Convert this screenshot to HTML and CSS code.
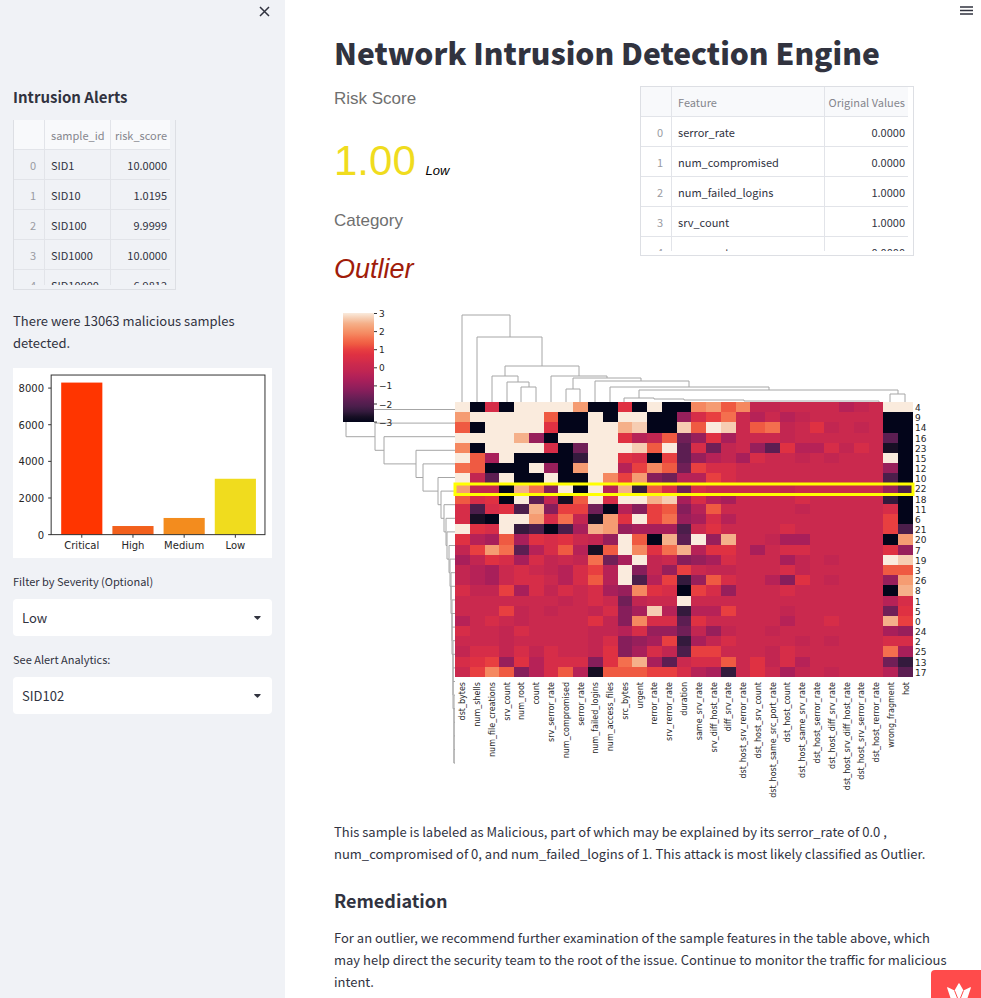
FILE: index.html
```html
<!DOCTYPE html>
<html lang="en">
<head>
<meta charset="UTF-8">
<meta name="viewport" content="width=device-width, initial-scale=1.0">
<title>Network Intrusion Detection Engine</title>
<link rel="stylesheet" href="styles.css">
</head>
<body>

<div class="app">
<aside class="sidebar">
    <button type="button" class="icon-button close" aria-label="Close sidebar">
        <svg width="11" height="11" viewBox="0 0 11 11"><path d="M1 1L10 10M10 1L1 10"/></svg>
    </button>
    <h2>Intrusion Alerts</h2>
    <div class="frame alerts">
        <div class="frame-view">
        <table>
            <thead>
            <tr><th class="idx"></th><th class="name">sample_id</th><th class="num">risk_score</th></tr>
            </thead>
            <tbody>
            <tr><td class="idx">0</td><td>SID1</td><td class="num">10.0000</td></tr>
            <tr><td class="idx">1</td><td>SID10</td><td class="num">1.0195</td></tr>
            <tr><td class="idx">2</td><td>SID100</td><td class="num">9.9999</td></tr>
            <tr><td class="idx">3</td><td>SID1000</td><td class="num">10.0000</td></tr>
            <tr><td class="idx">4</td><td>SID10000</td><td class="num">6.9812</td></tr>
            </tbody>
        </table>
        </div>
    </div>
    <p class="summary">There were 13063 malicious samples detected.</p>
    <svg class="bar-chart" id="barChart" viewBox="0 0 258 189" role="img" aria-label="Alerts by severity"></svg>
    <div class="field">
        <label for="severity">Filter by Severity (Optional)</label>
        <div class="select-box">
            <select id="severity"><option>Low</option></select>
            <svg class="caret" width="7" height="4" viewBox="0 0 7 4"><path d="M0 0.5Q0 0 1 0H6Q7 0 6.6 0.7L4 3.6Q3.5 4 3 3.6L0.4 1Z"/></svg>
        </div>
    </div>
    <div class="field">
        <label for="alert">See Alert Analytics:</label>
        <div class="select-box">
            <select id="alert"><option>SID102</option></select>
            <svg class="caret" width="7" height="4" viewBox="0 0 7 4"><path d="M0 0.5Q0 0 1 0H6Q7 0 6.6 0.7L4 3.6Q3.5 4 3 3.6L0.4 1Z"/></svg>
        </div>
    </div>
</aside>

<main class="main">
    <button type="button" class="icon-button menu" aria-label="Menu">
        <svg width="13" height="9" viewBox="0 0 13 9"><path d="M0 1H13M0 4.5H13M0 8H13"/></svg>
    </button>
    <div class="content">
        <h1>Network Intrusion Detection Engine</h1>
        <div class="columns">
            <div class="indicators">
                <div class="caption">Risk Score</div>
                <div class="score">1.00 <em>Low</em></div>
                <div class="caption">Category</div>
                <div class="category">Outlier</div>
            </div>
            <div>
            <div class="frame features">
                <div class="frame-view">
                <table>
                    <thead>
                    <tr><th class="idx"></th><th class="name">Feature</th><th class="num">Original Values</th></tr>
                    </thead>
                    <tbody>
                    <tr><td class="idx">0</td><td>serror_rate</td><td class="num">0.0000</td></tr>
                    <tr><td class="idx">1</td><td>num_compromised</td><td class="num">0.0000</td></tr>
                    <tr><td class="idx">2</td><td>num_failed_logins</td><td class="num">1.0000</td></tr>
                    <tr><td class="idx">3</td><td>srv_count</td><td class="num">1.0000</td></tr>
                    <tr><td class="idx">4</td><td>num_root</td><td class="num">0.0000</td></tr>
                    </tbody>
                </table>
                </div>
            </div>
            </div>
        </div>
        <svg class="cluster-map" id="clusterMap" viewBox="0 0 598 512" role="img" aria-label="Feature cluster map"></svg>
        <p>This sample is labeled as Malicious, part of which may be explained by its serror_rate of 0.0 , num_compromised of 0, and num_failed_logins of 1. This attack is most likely classified as Outlier.</p>
        <h3>Remediation</h3>
        <p>For an outlier, we recommend further examination of the sample features in the table above, which may help direct the security team to the root of the issue. Continue to monitor the traffic for malicious intent.</p>
    </div>
</main>
</div>

<a class="badge" href="#" aria-label="Hosted app">
    <svg width="24" height="16" viewBox="0 0 24 16"><path d="M0 5.500Q0 5 0.800 5.200L7.500 8.500L11.500 1.500Q12 1 12.500 1.500L16.500 8.500L23.200 5.200Q24 5 24 5.500L20.500 16H3.500Z"/><path class="cut" d="M7.500 8.500L10.500 16M16.500 8.500L13.500 16"/></svg>
</a>

<script src="charts.js"></script>
</body>
</html>
```
FILE: styles.css
```css
* {
  box-sizing: border-box;
}
body {
  margin: 0;
  font-family: "Noto Sans CJK SC", "Noto Sans", sans-serif;
  font-size: 13px;
  line-height: 22px;
  color: #31333f;
  background: #fff;
}
.app {
  display: flex;
  height: 100vh;
  overflow: hidden;
}
.sidebar {
  flex: 0 0 285px;
  display: flex;
  flex-direction: column;
  padding: 3px 13px 0 13px;
  background: #f0f2f6;
}
.icon-button {
  display: flex;
  flex-shrink: 0;
  align-items: center;
  justify-content: center;
  align-self: flex-end;
  width: 16px;
  height: 16px;
  padding: 0;
  border: none;
  background: none;
  cursor: pointer;
}
.icon-button path {
  fill: none;
  stroke: #31333f;
  stroke-width: 1.5;
}
h1, h2, h3, p {
  margin: 0;
}
h2 {
  margin-top: 67px;
  font-size: 15px;
  line-height: 22px;
}
.frame {
  border: 1px solid #dddfe4;
  height: 170px;
  padding: 0 5px 4px 0;
}
.alerts {
  width: 163px;
  margin-top: 12px;
  border-top: none;
}
.features {
  width: 274px;
}
.frame-view {
  height: 100%;
  overflow: hidden;
}
table {
  width: 100%;
  table-layout: fixed;
  border-collapse: separate;
  border-spacing: 0;
  font-size: 11px;
}
th, td {
  height: 30px;
  padding: 0 3px 0 6px;
  border-bottom: 1px solid #e2e4e9;
  border-right: 1px solid #e2e4e9;
  line-height: 16px;
  font-weight: 400;
  text-align: left;
  white-space: nowrap;
}
th {
  background: #f8f9fb;
  color: #85868d;
}
th:last-child, td:last-child {
  border-right: none;
}
.idx {
  width: 31px;
  padding-right: 8px;
  color: #9a9ba2;
  text-align: right;
}
.num {
  padding-left: 2px;
  text-align: right;
}
.alerts .name {
  width: 66px;
}
.features .name {
  width: 153px;
}
.summary {
  margin-top: 20px;
}
.bar-chart {
  display: block;
  width: 100%;
  margin-top: 14px;
  background: #fff;
}
.field {
  margin-top: 13px;
}
.field label {
  display: block;
  font-size: 11px;
  line-height: 20px;
}
.select-box {
  position: relative;
  margin-top: 8px;
}
.select-box select {
  display: block;
  width: 100%;
  height: 37px;
  padding: 0 9px;
  border: none;
  border-radius: 4px;
  background: #fff;
  color: #31333f;
  font-family: inherit;
  font-size: 13px;
  appearance: none;
}
.caret {
  position: absolute;
  right: 11px;
  top: 17px;
  fill: #31333f;
  pointer-events: none;
}
.main {
  flex: 1;
  display: flex;
  flex-direction: column;
  padding-top: 2px;
}
.menu {
  margin-right: 7px;
}
.content {
  padding: 12px 49px 0;
}
.content p {
  margin-right: -20px;
}
h1 {
  font-size: 30px;
  font-weight: 900;
  line-height: 44px;
}
.columns {
  display: grid;
  grid-template-columns: 1fr 1fr;
  gap: 14px;
  margin-top: 12px;
}
.indicators {
  font-family: "Liberation Sans", Arial, sans-serif;
}
.caption {
  font-size: 17px;
  line-height: 26px;
  color: #6f6f6f;
}
.score {
  margin: 26px 0 24px;
  font-size: 42px;
  line-height: 46px;
  color: #f0dc1e;
}
.score em {
  margin-left: -2px;
  font-size: 13px;
  line-height: 16px;
  color: #000;
}
.category {
  margin-top: 19px;
  font-size: 27px;
  line-height: 32px;
  font-style: italic;
  color: #a01c0a;
}
.cluster-map {
  display: block;
  width: 100%;
  margin: 15px 0 9px;
}
h3 {
  margin: 22px 0 14px;
  font-size: 18px;
  line-height: 26px;
}
svg text {
  font-family: "DejaVu Sans", sans-serif;
  fill: #262626;
}
.bar-chart text {
  font-size: 10px;
}
.cluster-map text {
  font-size: 9px;
}
.cluster-map .feature {
  font-size: 8px;
}
.axis {
  fill: none;
  stroke: #333;
  stroke-width: 1;
}
.tree {
  fill: none;
  stroke: #a6a6a6;
  stroke-width: 1;
}
.highlight {
  fill: none;
  stroke: #ffff00;
  stroke-width: 3;
}
.badge {
  position: fixed;
  right: 0;
  bottom: 0;
  display: flex;
  justify-content: center;
  width: 50px;
  height: 28px;
  padding: 12px 0 0 6px;
  border-top-left-radius: 4px;
  background: #ff4b4b;
}
.badge svg {
  flex-shrink: 0;
  fill: #fff;
}
.badge .cut {
  fill: none;
  stroke: #ff4b4b;
}
```
FILE: charts.js
```javascript
var SVG_NS = 'http://www.w3.org/2000/svg';

function add(parent, tag, attrs, text) {
    var el = document.createElementNS(SVG_NS, tag);
    for (var key in attrs) {
        el.setAttribute(key, attrs[key]);
    }
    if (text !== undefined) {
        el.textContent = text;
    }
    parent.appendChild(el);
    return el;
}

// severity bar chart
function drawBars() {
    var svg = document.getElementById('barChart');
    var bars = [
        ['Critical', 8300, '#ff3500'],
        ['High', 470, '#f2601c'],
        ['Medium', 910, '#f38c1e'],
        ['Low', 3050, '#f0dc1e']
    ];
    var bottom = 166;
    var scale = 36.5 / 2000;
    bars.forEach(function (bar, i) {
        var x = 48 + i * 51;
        var h = bar[1] * scale;
        add(svg, 'rect', {x: x, y: bottom - h, width: 41, height: h, fill: bar[2]});
        add(svg, 'path', {'class': 'axis', d: 'M' + (x + 20.5) + ' 166v3'});
        add(svg, 'text', {x: x + 20.5, y: 180, 'text-anchor': 'middle'}, bar[0]);
    });
    for (var v = 0; v <= 8000; v += 2000) {
        var y = bottom - v * scale;
        add(svg, 'path', {'class': 'axis', d: 'M35 ' + y + 'h3'});
        add(svg, 'text', {x: 31, y: y + 4, 'text-anchor': 'end'}, v);
    }
    add(svg, 'rect', {'class': 'axis', x: 38, y: 7, width: 213, height: 159});
}

// colour steps from low to high, one character per cell in the rows below
var KEYS = '0123456789abcdefghijkl';
var COLORS = [
    '#03051a', '#170f24', '#341a3d', '#4b1e4b', '#5c1e52', '#701f57',
    '#861e5b', '#971f5b', '#a81f5a', '#b62257', '#c22651', '#ca294e',
    '#d62d48', '#df3142', '#e83f40', '#ef5a42', '#f46f4e', '#f58860',
    '#f59c72', '#f5b08a', '#f6cdb2', '#faebdd'
];
var ROWS = [
    [4, 'l0c0lllli00d0l00hifhaabbbb9abll'],
    [9, 'illlllf00l0ll007cegb9b9abbbbb00'],
    [14, 'f0lllld00lljk00kflkbfgabdabab00'],
    [16, 'llllj70lllld9af57d8bbbabbbbbb40'],
    [23, 'h0llllc05lllkfl4c5ab74d99cacb10'],
    [15, 'lf8l00002lldc0e479a8cbbababbbl0'],
    [12, 'gf000l70ill9ehf5eccbbbbbbbbbb70'],
    [10, 'la4l00l00lhei6599ecbbbbbbbbbb30'],
    [22, 'iaa0jg6l0l9j2fc5cbbbbbabbbbbb73'],
    [18, 'fcd0l4a1flclljk8c98bbbbcbbbbb20'],
    [11, 'c3cd3j6ee5096ef69fbbbbbabbbbbc0'],
    [6, 'c10llicga1idleg78c9bbbbbbbbbbe0'],
    [21, 'ldcl23038ji78883bdbbbbcbbbbbbe3'],
    [20, 'd98f8dcdba7lf0j4l7jbba88bbbbb0i'],
    [7, 'aeig49cf91flhdgj9ddb8bccbbbbbd7'],
    [19, '8adc8cabag58lab678cbbb8ababbblk'],
    [3, 'a98bcba9ce9l6a7ebaabbbcabbbbbff'],
    [26, 'a98bccb9cf9l39e27fcbb96dbabbb7i'],
    [8, 'caae8cacbc87hdc0ec7bbbcbbbbbb0j'],
    [1, 'bbbbbbbabcb5abblbbbbbbbbbbbbb9c'],
    [5, 'bbbeababbac68k9299ebbbabbbbbb5d'],
    [0, '9bcbabbbbda6hcc4dbbbbb9bbcbbbje'],
    [24, 'cbbacbbbbaa9c775a7abbabbbbbbb87'],
    [2, 'bbbabbbbbac678e28acbbbbababbbcc'],
    [25, 'accacacbbad68ca3eebbbacbbbbbbg8'],
    [13, 'cde7d9ccc6dgj84bccfbdac9bbbbb52'],
    [17, 'behf69cf91fffeec982bdb8ababbb94']
];
var FEATURES = [
    'dst_bytes', 'num_shells', 'num_file_creations', 'srv_count', 'num_root',
    'count', 'srv_serror_rate', 'num_compromised', 'serror_rate',
    'num_failed_logins', 'num_access_files', 'src_bytes', 'urgent',
    'rerror_rate', 'srv_rerror_rate', 'duration', 'same_srv_rate',
    'srv_diff_host_rate', 'diff_srv_rate', 'dst_host_srv_rerror_rate',
    'dst_host_srv_count', 'dst_host_same_src_port_rate', 'dst_host_count',
    'dst_host_same_srv_rate', 'dst_host_serror_rate', 'dst_host_diff_srv_rate',
    'dst_host_srv_diff_host_rate', 'dst_host_srv_serror_rate',
    'dst_host_rerror_rate', 'wrong_fragment', 'hot'
];

var LEFT = 121, TOP = 102, CELL_W = 458 / 31, CELL_H = 275 / 27;

function drawClusterMap() {
    var svg = document.getElementById('clusterMap');

    // column dendrogram: left x, left foot, top y, right x, right foot
    [
        [128, 102, 15, 176, 37], [143, 102, 37, 208, 66],
        [171, 76, 66, 245, 76], [158, 102, 76, 184, 82],
        [173, 102, 82, 195, 87], [187, 102, 87, 202, 102],
        [217, 102, 76, 273, 78], [239, 89, 78, 307, 81],
        [232, 102, 89, 246, 102], [261, 102, 81, 355, 87],
        [276, 102, 87, 435, 90], [305, 98, 90, 564, 94],
        [290, 102, 98, 320, 99], [320, 99, 99, 350, 100],
        [350, 100, 100, 410, 101], [410, 101, 101, 545, 102],
        [556, 102, 94, 571, 102]
    ].forEach(function (t) {
        add(svg, 'path', {'class': 'tree', d: 'M' + t[0] + ' ' + t[1] + 'V' + t[2] + 'H' + t[3] + 'V' + t[4]});
    });

    // row dendrogram, every branch joins one leaf with the rest of the tree
    var branches = [12, 41, 50, 82, 89, 104, 107, 110, 112, 113, 115, 116, 117,
        117, 118, 118, 118, 119, 119, 119, 119, 120, 120, 120, 120, 120];
    branches.forEach(function (x, i) {
        var y = 109.5 + i * 13.6;
        var next = branches[i + 1] || LEFT;
        var drop = i < branches.length - 1 ? 27.2 : 13.6;
        add(svg, 'path', {'class': 'tree', d: 'M' + LEFT + ' ' + y + 'H' + x + 'v' + drop + 'H' + next});
    });

    ROWS.forEach(function (row, r) {
        var y = TOP + r * CELL_H;
        row[1].split('').forEach(function (key, c) {
            add(svg, 'rect', {
                x: LEFT + c * CELL_W, y: y, width: CELL_W, height: CELL_H,
                fill: COLORS[KEYS.indexOf(key)], 'shape-rendering': 'crispEdges'
            });
        });
        add(svg, 'text', {x: 581, y: y + 9}, row[0]);
    });
    add(svg, 'rect', {'class': 'highlight', x: 121, y: 184, width: 458, height: 10.5});

    FEATURES.forEach(function (name, c) {
        var x = LEFT + (c + 0.5) * CELL_W + 3;
        add(svg, 'text', {'class': 'feature', 'text-anchor': 'end', transform: 'translate(' + x + ' 382) rotate(-90)'}, name);
    });

    // colour scale
    var gradient = add(add(svg, 'defs', {}), 'linearGradient', {id: 'scale', x1: 0, y1: 1, x2: 0, y2: 0});
    COLORS.forEach(function (color, i) {
        add(gradient, 'stop', {offset: i / (COLORS.length - 1), 'stop-color': color});
    });
    add(svg, 'rect', {x: 9, y: 13, width: 31, height: 109, fill: 'url(#scale)'});
    for (var v = 3; v >= -3; v--) {
        var y = 13.5 + (3 - v) * 18.1;
        add(svg, 'path', {'class': 'axis', d: 'M40 ' + y + 'h3'});
        add(svg, 'text', {x: 45, y: y + 3.5}, String(v).replace('-', '\u2212'));
    }
}

drawBars();
drawClusterMap();
```
